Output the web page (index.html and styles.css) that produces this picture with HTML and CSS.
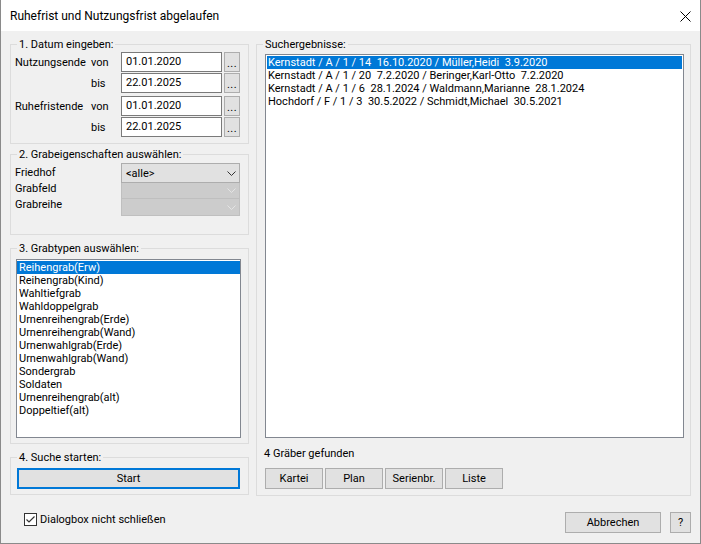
FILE: index.html
```html
<!DOCTYPE html>
<html lang="de">
<head>
<meta charset="utf-8">
<title>Ruhefrist und Nutzungsfrist abgelaufen</title>
<link rel="stylesheet" href="styles.css">
</head>
<body>
<div class="window">
  <div class="titlebar">
    <span class="title">Ruhefrist und Nutzungsfrist abgelaufen</span>
    <svg class="close" width="11" height="11" viewBox="0 0 11 11"><path d="M0.5 0.5 L10.5 10.5 M10.5 0.5 L0.5 10.5" stroke="#000" stroke-width="1" fill="none"/></svg>
  </div>
  <div class="body">
    <div class="columns">
      <div class="left">
        <fieldset class="group g1">
          <legend>1. Datum eingeben:</legend>
          <div class="content">
            <div class="daterow"><span class="lbl">Nutzungsende</span><span class="sub">von</span><span class="textbox">01.01.2020</span><span class="dots">...</span></div>
            <div class="daterow"><span class="lbl"></span><span class="sub">bis</span><span class="textbox">22.01.2025</span><span class="dots">...</span></div>
            <div class="daterow sep"><span class="lbl">Ruhefristende</span><span class="sub">von</span><span class="textbox">01.01.2020</span><span class="dots">...</span></div>
            <div class="daterow"><span class="lbl"></span><span class="sub">bis</span><span class="textbox">22.01.2025</span><span class="dots">...</span></div>
          </div>
        </fieldset>

        <fieldset class="group g2">
          <legend>2. Grabeigenschaften auswählen:</legend>
          <div class="content">
            <div class="proplabels">
              <span>Friedhof</span>
              <span>Grabfeld</span>
              <span>Grabreihe</span>
            </div>
            <div class="combos">
              <div class="combo"><span>&lt;alle&gt;</span><svg class="chev" width="9" height="5" viewBox="0 0 9 5"><polyline points="0.5,0.5 4.5,4.5 8.5,0.5" fill="none" stroke="#333" stroke-width="1"/></svg></div>
              <div class="combo disabled c2"><span></span><svg class="chev" width="9" height="5" viewBox="0 0 9 5"><polyline points="0.5,0.5 4.5,4.5 8.5,0.5" fill="none" stroke="#e4e4e4" stroke-width="1"/></svg></div>
              <div class="combo disabled c3"><span></span><svg class="chev" width="9" height="5" viewBox="0 0 9 5"><polyline points="0.5,0.5 4.5,4.5 8.5,0.5" fill="none" stroke="#e4e4e4" stroke-width="1"/></svg></div>
            </div>
          </div>
        </fieldset>

        <fieldset class="group g3">
          <legend>3. Grabtypen auswählen:</legend>
          <div class="content">
            <ul class="listbox types">
              <li class="selected">Reihengrab(Erw)</li>
              <li>Reihengrab(Kind)</li>
              <li>Wahltiefgrab</li>
              <li>Wahldoppelgrab</li>
              <li>Urnenreihengrab(Erde)</li>
              <li>Urnenreihengrab(Wand)</li>
              <li>Urnenwahlgrab(Erde)</li>
              <li>Urnenwahlgrab(Wand)</li>
              <li>Sondergrab</li>
              <li>Soldaten</li>
              <li>Urnenreihengrab(alt)</li>
              <li>Doppeltief(alt)</li>
            </ul>
          </div>
        </fieldset>

        <fieldset class="group g4">
          <legend>4. Suche starten:</legend>
          <div class="content">
            <button class="btn start">Start</button>
          </div>
        </fieldset>
      </div>

      <fieldset class="group right">
        <legend>Suchergebnisse:</legend>
        <div class="content">
          <ul class="listbox results">
            <li class="selected">Kernstadt / A / 1 / 14  16.10.2020 / Müller,Heidi  3.9.2020</li>
            <li>Kernstadt / A / 1 / 20  7.2.2020 / Beringer,Karl-Otto  7.2.2020</li>
            <li>Kernstadt / A / 1 / 6  28.1.2024 / Waldmann,Marianne  28.1.2024</li>
            <li>Hochdorf / F / 1 / 3  30.5.2022 / Schmidt,Michael  30.5.2021</li>
          </ul>
          <div class="found">4 Gräber gefunden</div>
          <div class="actions">
            <button class="btn small">Kartei</button>
            <button class="btn small">Plan</button>
            <button class="btn small">Serienbr.</button>
            <button class="btn small">Liste</button>
          </div>
        </div>
      </fieldset>
    </div>

    <div class="footer">
      <label class="check">
        <span class="box"><svg width="11" height="11" viewBox="0 0 11 11"><polyline points="1.5,5.5 4,8 9.5,2.5" fill="none" stroke="#333" stroke-width="1.2"/></svg></span>
        <span>Dialogbox nicht schließen</span>
      </label>
      <div class="footbtns">
        <button class="btn cancel">Abbrechen</button>
        <button class="btn help">?</button>
      </div>
    </div>
  </div>
</div>
</body>
</html>
```
FILE: styles.css
```css
* { box-sizing: border-box; }
html, body { margin: 0; padding: 0; }
body {
  font-family: Roboto, "Noto Sans", sans-serif;
  font-size: 11px;
  color: #000;
  background: #f0f0f0;
}
.window {
  width: 701px;
  height: 544px;
  background: #f0f0f0;
  border: 1px solid #8a8a8a;
  border-top: none;
  display: flex;
  flex-direction: column;
}
.titlebar {
  height: 31px;
  background: #fff;
  display: flex;
  align-items: center;
  justify-content: space-between;
  padding: 0 9px 0 9px;
  flex: none;
}
.title { font-size: 12px; line-height: 16px; }
.close { display: block; margin-top: 1px; }

.body {
  flex: 1;
  padding: 6px 9px 0 9px;
  display: flex;
  flex-direction: column;
}
.columns { display: flex; gap: 7px; }
.left { width: 239px; display: flex; flex-direction: column; }

.group {
  margin: 0;
  padding: 0;
  min-width: 0;
  border: 1px solid #dcdcdc;
}
.group legend {
  margin-left: 6px;
  padding: 0 2px;
  line-height: 15px;
  height: 15px;
}

/* group 1 */
.g1 .content { padding: 0 8px 6px 4px; }
.daterow { display: flex; align-items: center; height: 20px; margin-top: 1px; }
.daterow:first-child { margin-top: 0; }
.daterow.sep { margin-top: 3px; }
.lbl { width: 76px; flex: none; }
.sub { width: 30px; flex: none; }
.textbox {
  width: 101px;
  height: 20px;
  flex: none;
  border: 1px solid #7a7a7a;
  background: #fff;
  padding-left: 4px;
  line-height: 18px;
  margin-right: 2px;
}
.dots {
  width: 16px;
  height: 20px;
  flex: none;
  background: #e1e1e1;
  border: 1px solid #adadad;
  text-align: center;
  line-height: 22px;
  letter-spacing: 0.5px;
}

/* group 2 */
.g2 { margin-top: 3px; }
.g2 .content { padding: 1px 8px 18px 4px; display: flex; }
.proplabels {
  width: 106px;
  padding-top: 2px;
  display: flex;
  flex-direction: column;
  line-height: 16px;
}
.combos { width: 119px; display: flex; flex-direction: column; }
.combo {
  height: 20px;
  background: #e1e1e1;
  border: 1px solid #adadad;
  display: flex;
  align-items: center;
  justify-content: space-between;
  padding: 0 3px 0 4px;
}
.combo.disabled { background: #cccccc; border-color: #bfbfbf; border-top: none; }
.combo.c2 { height: 16px; }
.combo.c3 { height: 17px; }
.chev { display: block; }

/* group 3 */
.g3 { margin-top: 6px; }
.g3 .content { padding: 3px 7px 5px 5px; }
.listbox {
  list-style: none;
  margin: 0;
  background: #fff;
  border: 1px solid #828790;
}
.listbox li { height: 13px; line-height: 13px; white-space: pre; }
.listbox li.selected { background: #0078d7; color: #fff; }
.types { height: 179px; padding: 1px 0 0 0; }
.types li { padding-left: 2px; }

/* group 4 */
.g4 { margin-top: 6px; }
.g4 .content { padding: 3px 8px 5px 6px; }

.btn {
  font: inherit;
  color: #000;
  background: #e1e1e1;
  border: 1px solid #adadad;
  border-radius: 0;
  padding: 0;
  height: 21px;
  line-height: 19px;
  text-align: center;
  display: block;
}
.start { width: 223px; border: 2px solid #0078d7; line-height: 17px; }

/* right */
.right { width: 435px; }
.right .content { padding: 2px 6px 6px 8px; }
.results { height: 384px; padding: 1px 1px 0 1px; }
.results li { padding-left: 1px; }
.found { margin-top: 9px; line-height: 14px; margin-left: -1px; }
.actions { display: flex; gap: 2px; margin-top: 7px; }
.btn.small { width: 58px; }

/* footer */
.footer {
  margin-top: 16px;
  display: flex;
  justify-content: space-between;
  align-items: flex-start;
}
.check { display: flex; align-items: center; gap: 3px; margin-left: 14px; margin-top: 1px; line-height: 13px; }
.box {
  width: 13px;
  height: 13px;
  border: 1px solid #333;
  background: #fff;
  display: flex;
  align-items: center;
  justify-content: center;
}
.box svg { display: block; }
.footbtns { display: flex; gap: 9px; }
.cancel { width: 96px; }
.help { width: 21px; }
```
